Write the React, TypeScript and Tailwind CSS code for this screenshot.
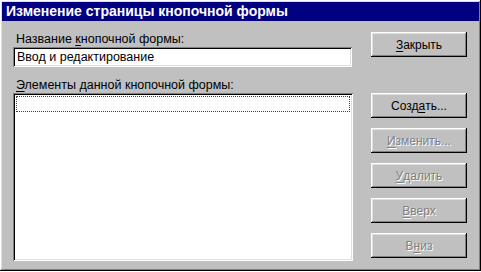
import React from 'react';

const raised =
  'shadow-[inset_-1px_-1px_0_#000,inset_1px_1px_0_#fff,inset_-2px_-2px_0_#808080,inset_2px_2px_0_#dfdfdf]';
const sunken =
  'shadow-[inset_1px_1px_0_#808080,inset_-1px_-1px_0_#fff,inset_2px_2px_0_#000,inset_-2px_-2px_0_#dfdfdf]';

type BtnProps = { label: string; hot: number; disabled?: boolean; className?: string };

const Hot: React.FC<{ text: string; hot: number }> = ({ text, hot }) => (
  <>
    {text.slice(0, hot)}
    <span className="underline underline-offset-2">{text[hot]}</span>
    {text.slice(hot + 1)}
  </>
);

const Button: React.FC<BtnProps> = ({ label, hot, disabled, className = '' }) => (
  <button
    className={`w-[96px] h-[25px] bg-[#c0c0c0] ${raised} text-[12px] flex items-center justify-center ${
      disabled ? 'text-[#808080] [text-shadow:1px_1px_0_#fff]' : 'text-black'
    } ${className}`}
  >
    <Hot text={label} hot={hot} />
  </button>
);

export default function App() {
  return (
    <div
      className={`w-[481px] h-[271px] bg-[#c0c0c0] p-[2px] ${raised} flex flex-col`}
      style={{ fontFamily: '"Liberation Sans", Arial, sans-serif' }}
    >
      <div className="h-[19px] bg-[#000080] text-white font-bold text-[14px] leading-[19px] px-[4px] shrink-0">
        Изменение страницы кнопочной формы
      </div>

      <div className="flex flex-1 pl-[11px] pr-[10px]">
        {/* left side */}
        <div className="flex flex-col w-[339px]">
          <label className="mt-[11px] ml-[3px] text-[12.5px] leading-[14px] text-black">
            Название <Hot text="кнопочной" hot={0} /> формы:
          </label>
          <div className={`mt-[1px] h-[20px] bg-white ${sunken} px-[4px] text-[12.5px] leading-[20px] text-black`}>
            Ввод и редактирование
          </div>
          <label className="mt-[11px] ml-[3px] text-[12.5px] leading-[14px] text-black">
            <Hot text="Элементы" hot={0} /> данной кнопочной формы:
          </label>
          <div className={`mt-[1px] h-[168px] w-[340px] bg-white ${sunken} p-[2px]`}>
            <div className="h-[16px] mx-[1px] mt-[1px] border border-dotted border-[#404040]" />
          </div>
        </div>

        {/* buttons */}
        <div className="flex flex-col ml-[19px] pt-[11px]">
          <Button label="Закрыть" hot={0} />
          <Button label="Создать..." hot={4} className="mt-[36px]" />
          <Button label="Изменить..." hot={0} disabled className="mt-[10px]" />
          <Button label="Удалить" hot={0} disabled className="mt-[10px]" />
          <Button label="Вверх" hot={0} disabled className="mt-[10px]" />
          <Button label="Вниз" hot={1} disabled className="mt-[10px]" />
        </div>
      </div>
    </div>
  );
}
